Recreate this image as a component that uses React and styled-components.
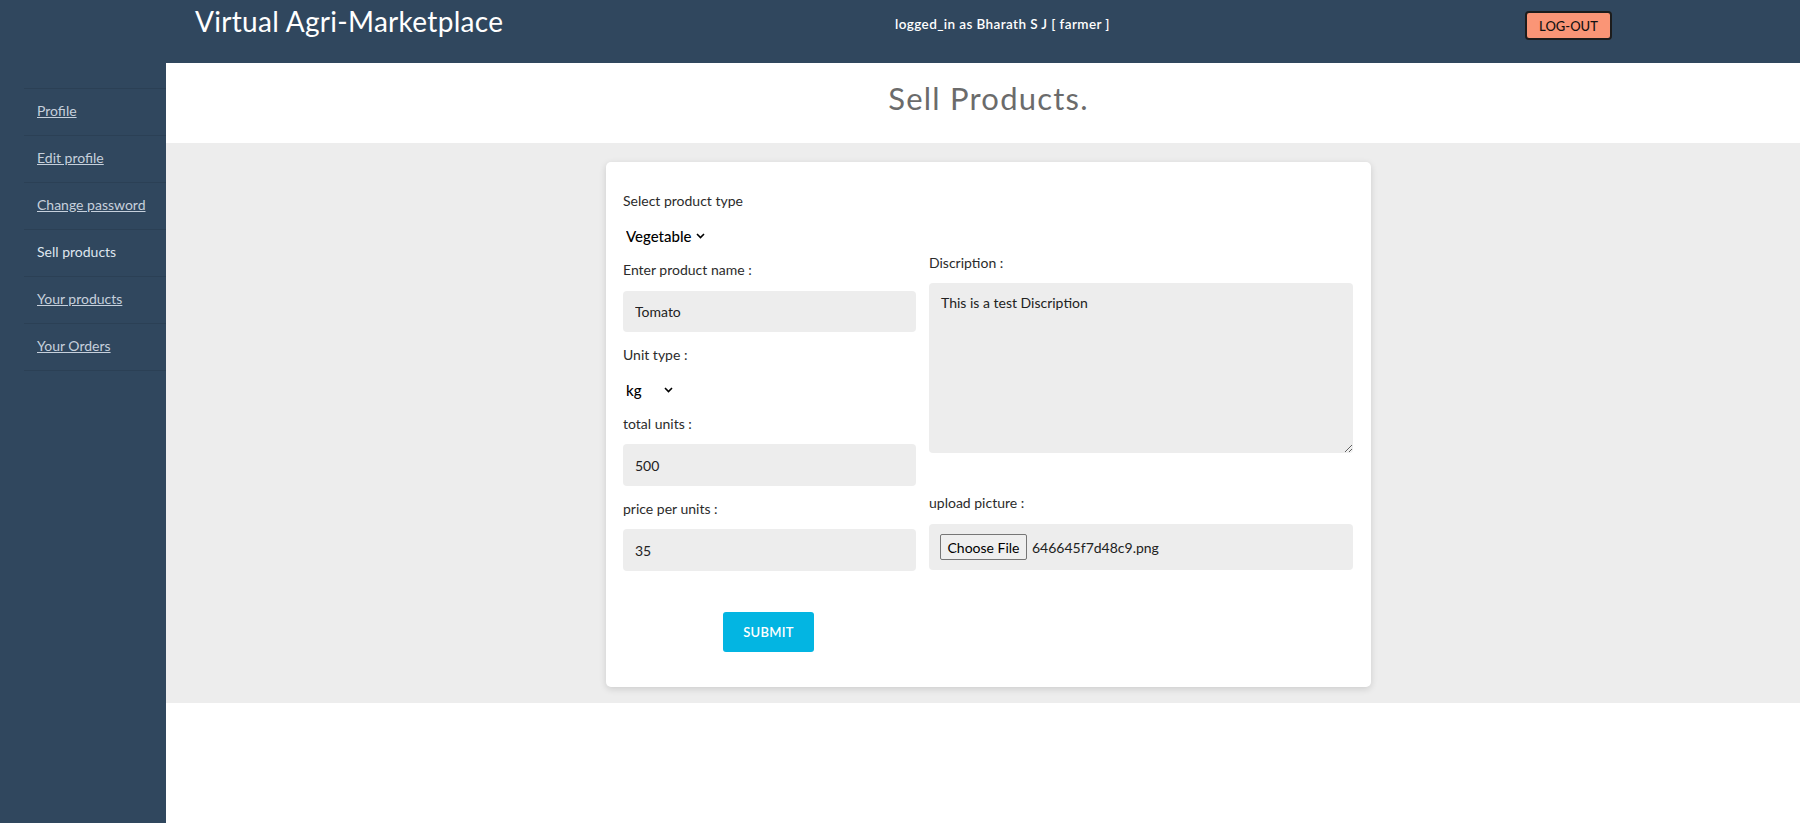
import React from 'react';
import styled, { createGlobalStyle } from 'styled-components';

const GlobalStyle = createGlobalStyle`
  body {
    margin: 0;
    font-family: "Lato", "Liberation Sans", sans-serif;
    background: #fff;
  }
  * { box-sizing: border-box; }
`;

const Page = styled.div`
  display: flex;
  flex-direction: column;
  min-height: 100vh;
`;

const Header = styled.header`
  display: grid;
  grid-template-columns: 700px 630px 87px;
  align-items: start;
  height: 63px;
  padding-left: 195px;
  background: #30475e;
`;

const Brand = styled.h1`
  margin: 4px 0 0;
  font-size: 28px;
  font-weight: 400;
  line-height: 34px;
  color: #fff;
  letter-spacing: 0.3px;
`;

const UserInfo = styled.div`
  margin-top: 15px;
  font-size: 13.5px;
  font-weight: 600;
  line-height: 18px;
  color: #fff;
  letter-spacing: 0.4px;
`;

const LogoutButton = styled.button`
  margin-top: 11px;
  width: 87px;
  height: 29px;
  padding: 0;
  background: #fa9576;
  border: 2px solid #1c1c1c;
  border-radius: 4px;
  font-family: inherit;
  font-size: 13px;
  font-weight: 500;
  color: #111;
  cursor: pointer;
`;

const Body = styled.div`
  display: flex;
  flex: 1;
`;

const Sidebar = styled.nav`
  width: 166px;
  flex-shrink: 0;
  padding-top: 25px;
  background: #30475e;
`;

const NavList = styled.ul`
  list-style: none;
  margin: 0 0 0 24px;
  padding: 0;
  border-bottom: 1px solid #2b4055;
`;

const NavItem = styled.li`
  display: flex;
  align-items: center;
  height: 47px;
  padding: 0 0 4px 13px;
  border-top: 1px solid #2b4055;
`;

const NavLink = styled.a`
  font-size: 14px;
  color: ${(p) => (p.$active ? '#dfe6ee' : '#c6d0dc')};
  text-decoration: ${(p) => (p.$active ? 'none' : 'underline')};
  cursor: pointer;
`;

const Main = styled.main`
  flex: 1;
  display: flex;
  flex-direction: column;
`;

const TitleBand = styled.div`
  height: 80px;
  padding: 16px 0 0 11px;
  text-align: center;
`;

const PageTitle = styled.h2`
  margin: 0;
  font-size: 31px;
  font-weight: 400;
  line-height: 38px;
  color: #6b6b6b;
  letter-spacing: 1.2px;
`;

const FormBand = styled.section`
  display: flex;
  justify-content: center;
  padding: 19px 0 16px 11px;
  background: #ededed;
`;

const Card = styled.form`
  display: grid;
  grid-template-columns: 293px 424px;
  column-gap: 13px;
  align-items: start;
  width: 765px;
  padding: 29px 18px 35px 17px;
  background: #fff;
  border-radius: 5px;
  box-shadow: 0 2px 7px rgba(0, 0, 0, 0.14);
`;

const Column = styled.div`
  display: flex;
  flex-direction: column;
  padding-top: ${(p) => p.$offset || 0}px;
`;

const Label = styled.label`
  display: block;
  margin-bottom: ${(p) => p.$gap ?? 11}px;
  font-size: 14px;
  line-height: 20px;
  color: #2b2b2b;
`;

const TextInput = styled.input`
  width: 100%;
  height: ${(p) => p.$h || 42}px;
  margin-bottom: 13px;
  padding: 0 12px;
  border: none;
  border-radius: 4px;
  background: #ededed;
  font-family: inherit;
  font-size: 14px;
  color: #222;
  outline: none;
`;

const TextArea = styled.textarea`
  width: 100%;
  height: 170px;
  margin-bottom: 40px;
  padding: 10px 12px;
  border: none;
  border-radius: 4px;
  background: #ededed;
  font-family: inherit;
  font-size: 14px;
  line-height: 20px;
  color: #222;
  outline: none;
`;

const SelectRow = styled.div`
  display: flex;
  align-items: center;
  height: 24px;
  margin: 0 0 12px 3px;
`;

const Select = styled.select`
  appearance: none;
  width: ${(p) => p.$w}px;
  padding: 0;
  border: none;
  background: transparent;
  font-family: inherit;
  font-size: 15px;
  font-weight: 500;
  color: #000;
  outline: none;
`;

const Chevron = () => (
  <svg width="9" height="6" viewBox="0 0 9 6">
    <polyline points="1,1 4.5,4.5 8,1" fill="none" stroke="#000" strokeWidth="1.6" />
  </svg>
);

const FileBox = styled.div`
  display: flex;
  align-items: center;
  gap: 5px;
  height: 46px;
  padding-left: 11px;
  border-radius: 4px;
  background: #ededed;
`;

const FileButton = styled.button`
  height: 26px;
  width: 87px;
  padding: 0;
  background: #efefef;
  border: 1px solid #767676;
  border-radius: 2px;
  font-family: inherit;
  font-size: 14px;
  color: #000;
`;

const FileName = styled.span`
  font-size: 14px;
  color: #222;
`;

const SubmitButton = styled.button`
  width: 91px;
  height: 40px;
  margin: 28px 0 0 100px;
  background: #03b5e2;
  border: none;
  border-radius: 3px;
  font-family: inherit;
  font-size: 13px;
  font-weight: 600;
  color: #fff;
  text-transform: uppercase;
  letter-spacing: 0.3px;
  cursor: pointer;
`;

const links = [
  { label: 'Profile' },
  { label: 'Edit profile' },
  { label: 'Change password' },
  { label: 'Sell products', active: true },
  { label: 'Your products' },
  { label: 'Your Orders' },
];

function App() {
  return (
    <Page>
      <GlobalStyle />
      <Header>
        <Brand>Virtual Agri-Marketplace</Brand>
        <UserInfo>logged_in as Bharath S J [ farmer ]</UserInfo>
        <LogoutButton>LOG-OUT</LogoutButton>
      </Header>
      <Body>
        <Sidebar>
          <NavList>
            {links.map((l) => (
              <NavItem key={l.label}>
                <NavLink $active={l.active}>{l.label}</NavLink>
              </NavItem>
            ))}
          </NavList>
        </Sidebar>
        <Main>
          <TitleBand>
            <PageTitle>Sell Products.</PageTitle>
          </TitleBand>
          <FormBand>
            <Card onSubmit={(e) => e.preventDefault()}>
              <Column>
                <Label $gap={13}>Select product type</Label>
                <SelectRow>
                  <Select $w={70} defaultValue="Vegetable">
                    <option>Vegetable</option>
                    <option>Fruit</option>
                    <option>Grain</option>
                  </Select>
                  <Chevron />
                </SelectRow>
                <Label>Enter product name :</Label>
                <TextInput $h={41} defaultValue="Tomato" />
                <Label $gap={13}>Unit type :</Label>
                <SelectRow>
                  <Select $w={38} defaultValue="kg">
                    <option>kg</option>
                    <option>litre</option>
                  </Select>
                  <Chevron />
                </SelectRow>
                <Label $gap={10}>total units :</Label>
                <TextInput defaultValue="500" />
                <Label $gap={10}>price per units :</Label>
                <TextInput defaultValue="35" />
                <SubmitButton type="submit">Submit</SubmitButton>
              </Column>
              <Column $offset={62}>
                <Label $gap={10}>Discription :</Label>
                <TextArea defaultValue="This is a test Discription" />
                <Label>upload picture :</Label>
                <FileBox>
                  <FileButton type="button">Choose File</FileButton>
                  <FileName>646645f7d48c9.png</FileName>
                </FileBox>
              </Column>
            </Card>
          </FormBand>
        </Main>
      </Body>
    </Page>
  );
}

export default App;
